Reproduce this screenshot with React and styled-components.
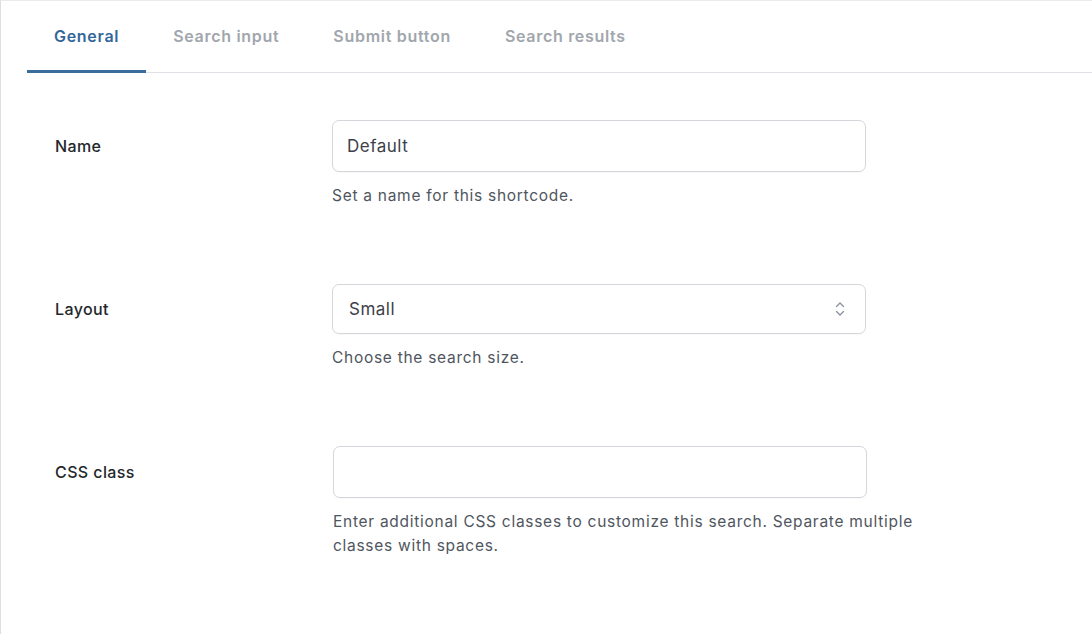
import { createGlobalStyle, styled } from "styled-components";

const GlobalStyle = createGlobalStyle`
    html, body {
        margin:0;
        padding:0;
        background:#ffffff;
    }
    body {
        font-family:Inter, "Noto Sans", "Liberation Sans", sans-serif;
        -webkit-font-smoothing:antialiased;
    }
`

const Panel = styled.div`
    width:1092px;
    height:634px;
    box-sizing:border-box;
    background:#ffffff;
    border-left:1px solid #dcdee2;
    border-top:1px solid #e9ecee;
    overflow:hidden;
`

const TabBar = styled.nav`
    display:flex;
    margin-left:26px;
    height:71px;
    border-bottom:1px solid #dfe2e6;
`

const Tab = styled.div`
    display:flex;
    align-items:center;
    padding:1px 27px 0;
    margin-bottom:-1px;
    font-size:16px;
    font-weight:600;
    letter-spacing:0.7px;
    color:${(p) => (p.$active ? "#33679a" : "#a1a6ad")};
    border-bottom:3px solid ${(p) => (p.$active ? "#3a6d9c" : "transparent")};
    box-sizing:border-box;
`

const Form = styled.div`
    display:flex;
    flex-direction:column;
    padding:9px 0 0 54px;
`

const Row = styled.div`
    display:grid;
    grid-template-columns:277px 600px;
    padding:38px 0 38px;
`

const Label = styled.div`
    height:${(p) => p.$h}px;
    display:flex;
    align-items:center;
    font-size:16px;
    font-weight:500;
    letter-spacing:0.4px;
    color:#23272c;
`

const Field = styled.div`
    display:flex;
    flex-direction:column;
    margin-left:${(p) => p.$shift || 0}px;
`

const Input = styled.div`
    width:534px;
    height:52px;
    box-sizing:border-box;
    border:1px solid #d3d6da;
    border-radius:7px;
    display:flex;
    align-items:center;
    padding:0 14px;
    font-size:17px;
    letter-spacing:0.5px;
    color:#3c4149;
    box-shadow:0 1px 1px rgba(0,0,0,0.03);
`

const Select = styled(Input)`
    height:50px;
    padding:0 19px 0 16px;
    justify-content:space-between;
`

const Chevrons = styled.svg`
    width:12px;
    height:18px;
`

const Help = styled.div`
    margin-top:12px;
    font-size:15.5px;
    line-height:24px;
    letter-spacing:0.72px;
    color:#50565e;
`

const tabs = ["General", "Search input", "Submit button", "Search results"];

const App = () => {
    return (
        <>
            <GlobalStyle />
            <Panel>
                <TabBar>
                    {tabs.map((t, i) => (
                        <Tab key={t} $active={i === 0}>{t}</Tab>
                    ))}
                </TabBar>
                <Form>
                    <Row>
                        <Label $h={52}>Name</Label>
                        <Field>
                            <Input>Default</Input>
                            <Help>Set a name for this shortcode.</Help>
                        </Field>
                    </Row>
                    <Row>
                        <Label $h={50}>Layout</Label>
                        <Field>
                            <Select>
                                Small
                                <Chevrons viewBox="0 0 12 18" fill="none" stroke="#8a9099" strokeWidth="1.3" strokeLinecap="round" strokeLinejoin="round">
                                    <path d="M2.5 6.5 L6 3 L9.5 6.5" />
                                    <path d="M2.5 11.5 L6 15 L9.5 11.5" />
                                </Chevrons>
                            </Select>
                            <Help>Choose the search size.</Help>
                        </Field>
                    </Row>
                    <Row>
                        <Label $h={52}>CSS class</Label>
                        <Field $shift={1}>
                            <Input />
                            <Help>Enter additional CSS classes to customize this search. Separate multiple classes with spaces.</Help>
                        </Field>
                    </Row>
                </Form>
            </Panel>
        </>
    )
}

export default App;
